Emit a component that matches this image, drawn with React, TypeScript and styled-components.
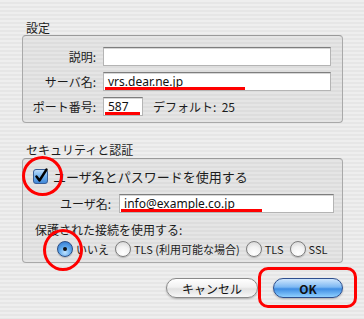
import React from 'react';
import styled, { createGlobalStyle } from 'styled-components';

const GlobalStyle = createGlobalStyle`
  html, body {
    margin: 0;
    padding: 0;
  }
  body {
    font-family: "Noto Sans CJK JP", "DejaVu Sans", sans-serif;
    color: #1c1c1c;
  }
`;

const Window = styled.div`
  width: 364px;
  height: 319px;
  box-sizing: border-box;
  overflow: hidden;
  padding-top: 21px;
  background: repeating-linear-gradient(
    to bottom,
    #eeeeee 0px,
    #eeeeee 2px,
    #e6e6e6 2px,
    #e6e6e6 4px
  );
`;

const SectionTitle = styled.div<{ $top?: number }>`
  margin: ${p => p.$top || 0}px 0 0 26px;
  font-size: 12px;
  line-height: 14px;
  height: 14px;
`;

const GroupBox = styled.div<{ $height: number; $top?: number }>`
  position: relative;
  box-sizing: border-box;
  margin: ${p => p.$top || 0}px 0 0 22px;
  width: 321px;
  height: ${p => p.$height}px;
  border: 1px solid #a9a9a9;
  border-top-color: #9a9a9a;
  border-radius: 4px;
  background: rgba(0, 0, 0, 0.035);
`;

const FormGrid = styled.div`
  display: grid;
  grid-template-columns: 73px auto;
  column-gap: 7px;
  row-gap: 6px;
  padding-top: 11px;
  align-items: center;
`;

const Label = styled.label`
  font-size: 12px;
  text-align: right;
  white-space: nowrap;
`;

const FieldWrap = styled.div`
  display: flex;
  align-items: center;
`;

const Field = styled.div<{ $width: number }>`
  position: relative;
  box-sizing: border-box;
  width: ${p => p.$width}px;
  height: 19px;
  background: #fff;
  border: 1px solid #b4b4b4;
  border-top-color: #7e7e7e;
  box-shadow: inset 0 1px 0 #d6d6d6;
  padding: 0 4px;
  font-family: "Noto Sans", "DejaVu Sans", sans-serif;
  font-size: 12px;
  line-height: 18px;
  color: #111;
  white-space: nowrap;
`;

const RedLine = styled.span<{ $left: number; $width: number }>`
  position: absolute;
  left: ${p => p.$left}px;
  bottom: 0;
  width: ${p => p.$width}px;
  height: 3px;
  background: #ff0000;
`;

const Hint = styled.span`
  margin-left: 10px;
  font-size: 12px;
  white-space: nowrap;
`;

const CheckRow = styled.div`
  display: flex;
  align-items: center;
  gap: 4px;
  padding: 9px 0 0 10px;
  font-size: 13px;
  line-height: 15px;
`;

const Marked = styled.span`
  position: relative;
  display: inline-flex;
`;

const RedRing = styled.span<{ $l: number; $t: number; $w: number; $h: number }>`
  position: absolute;
  left: ${p => p.$l}px;
  top: ${p => p.$t}px;
  width: ${p => p.$w}px;
  height: ${p => p.$h}px;
  box-sizing: border-box;
  border: 3px solid #f00;
  border-radius: 50%;
  pointer-events: none;
`;

const RedFrame = styled.span`
  position: absolute;
  left: -15px;
  top: -11px;
  width: 99px;
  height: 41px;
  box-sizing: border-box;
  border: 3px solid #f00;
  border-radius: 10px;
  pointer-events: none;
`;

const UserRow = styled.div`
  display: flex;
  align-items: center;
  gap: 8px;
  margin-top: 10px;
  padding-left: 37px;
`;

const SubTitle = styled.div`
  margin: 10px 0 0 12px;
  font-size: 12px;
  line-height: 14px;
`;

const RadioRow = styled.div`
  display: flex;
  align-items: center;
  gap: 6px;
  margin: 4px 0 0 34px;
  font-size: 11px;
`;

const RadioItem = styled.span`
  display: inline-flex;
  align-items: center;
  gap: 3px;
  white-space: nowrap;
`;

const RadioDot = styled.span<{ $on?: boolean }>`
  position: relative;
  display: inline-block;
  box-sizing: border-box;
  width: 16px;
  height: 16px;
  border-radius: 50%;
  border: 1px solid ${p => (p.$on ? '#2b4f86' : '#7d7d7d')};
  background: ${p =>
    p.$on
      ? 'radial-gradient(circle at 50% 75%, #bfe3ff 0%, #5fa8ec 45%, #2a6fc8 100%)'
      : 'radial-gradient(circle at 50% 80%, #ffffff 0%, #f2f2f2 50%, #cfcfcf 100%)'};
  box-shadow: 0 1px 1px rgba(0, 0, 0, 0.2);

  &::after {
    content: '';
    display: ${p => (p.$on ? 'block' : 'none')};
    position: absolute;
    left: 5px;
    top: 5px;
    width: 4px;
    height: 4px;
    border-radius: 50%;
    background: #111;
  }
`;

const ButtonRow = styled.div`
  display: flex;
  justify-content: flex-end;
  gap: 15px;
  margin-top: 15px;
  padding-right: 21px;
`;

const Button = styled.button<{ $primary?: boolean; $width: number }>`
  box-sizing: border-box;
  width: ${p => p.$width}px;
  height: 20px;
  border-radius: 10px;
  padding: 0;
  font-family: "Noto Sans CJK JP", "DejaVu Sans", sans-serif;
  font-size: 12px;
  font-weight: ${p => (p.$primary ? 700 : 400)};
  color: #111;
  border: 1px solid ${p => (p.$primary ? '#2e4f8e' : '#8a8a8a')};
  background: ${p =>
    p.$primary
      ? 'linear-gradient(to bottom, #cfe6fd 0%, #7db8f3 45%, #3f8de3 55%, #8fd0ff 100%)'
      : 'linear-gradient(to bottom, #ffffff 0%, #f1f1f1 45%, #e1e1e1 55%, #f7f7f7 100%)'};
  box-shadow: 0 1px 2px rgba(0, 0, 0, 0.25);
`;

const CheckBox = () => (
  <svg width="16" height="16" viewBox="0 0 16 16">
    <defs>
      <linearGradient id="cb" x1="0" y1="0" x2="0" y2="1">
        <stop offset="0" stopColor="#c4e0fa" />
        <stop offset="0.5" stopColor="#6fb0ee" />
        <stop offset="1" stopColor="#3e86d6" />
      </linearGradient>
    </defs>
    <rect x="0.5" y="1.5" width="14" height="14" rx="2.5" fill="url(#cb)" stroke="#385f98" />
    <path d="M3.5 8.5 L6.5 12.5 L13.5 1.5" fill="none" stroke="#000" strokeWidth="2.4" strokeLinecap="round" strokeLinejoin="round" />
  </svg>
);

export default function App() {
  return (
    <Window>
      <GlobalStyle />
      <SectionTitle>設定</SectionTitle>
      <GroupBox $height={88}>
        <FormGrid>
          <Label>説明:</Label>
          <FieldWrap>
            <Field $width={228} />
          </FieldWrap>
          <Label>サーバ名:</Label>
          <FieldWrap>
            <Field $width={228}>
              vrs.dear.ne.jp
              <RedLine $left={1} $width={140} />
            </Field>
          </FieldWrap>
          <Label>ポート番号:</Label>
          <FieldWrap>
            <Field $width={40}>
              587
              <RedLine $left={1} $width={35} />
            </Field>
            <Hint>デフォルト:&nbsp; 25</Hint>
          </FieldWrap>
        </FormGrid>
      </GroupBox>

      <SectionTitle $top={20}>セキュリティと認証</SectionTitle>
      <GroupBox $height={105} $top={1}>
        <CheckRow>
          <Marked>
            <CheckBox />
            <RedRing $l={-11} $t={-12} $w={41} $h={40} />
          </Marked>
          <span>ユーザ名とパスワードを使用する</span>
        </CheckRow>
        <UserRow>
          <Label>ユーザ名:</Label>
          <Field $width={215}>
            info@example.co.jp
            <RedLine $left={1} $width={141} />
          </Field>
        </UserRow>
        <SubTitle>保護された接続を使用する:</SubTitle>
        <RadioRow>
          <RadioItem>
            <Marked>
              <RadioDot $on />
              <RedRing $l={-14} $t={-12} $w={40} $h={42} />
            </Marked>
            いいえ
          </RadioItem>
          <RadioItem>
            <RadioDot />
            TLS (利用可能な場合)
          </RadioItem>
          <RadioItem>
            <RadioDot />
            TLS
          </RadioItem>
          <RadioItem>
            <RadioDot />
            SSL
          </RadioItem>
        </RadioRow>
      </GroupBox>

      <ButtonRow>
        <Button $width={92}>キャンセル</Button>
        <Marked>
          <Button $primary $width={70}>OK</Button>
          <RedFrame />
        </Marked>
      </ButtonRow>
    </Window>
  );
}
